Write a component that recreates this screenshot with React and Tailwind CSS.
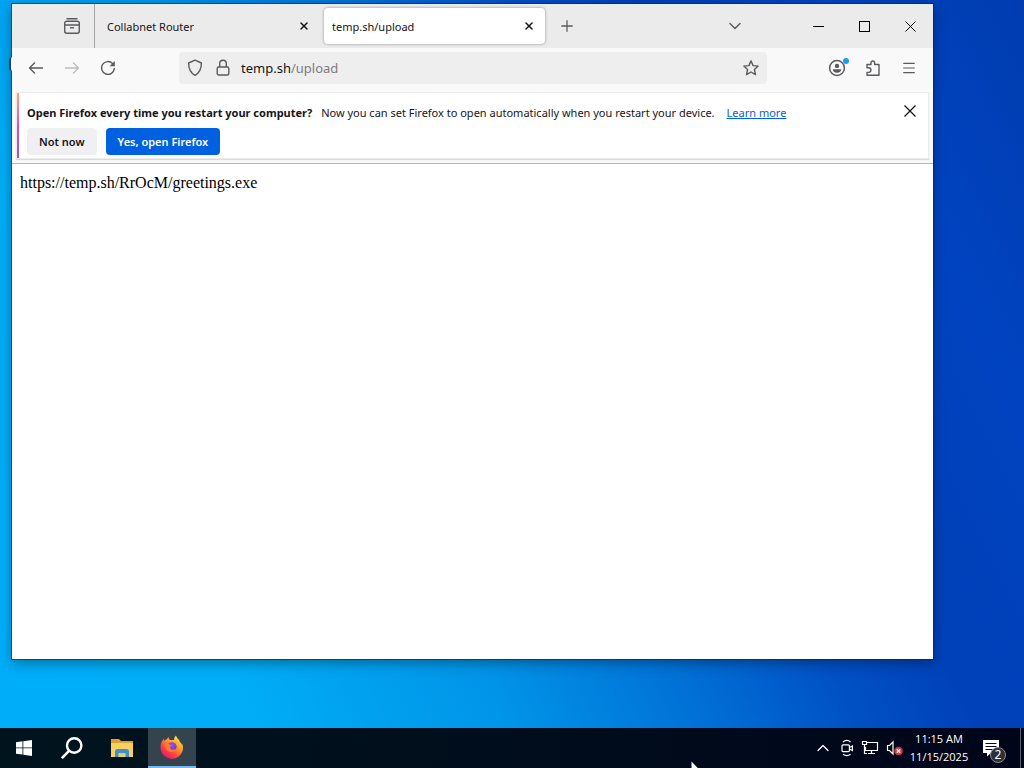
import React from 'react'
import { ChevronDown, ChevronUp, Menu, Plus, X } from 'lucide-react'

const iconButton = "flex h-8 w-8 items-center justify-center rounded text-[#5b5b5f] hover:bg-black/5"
const captionButton = "flex h-11 w-[46px] items-center justify-center text-black hover:bg-black/10"

function TabOverviewIcon() {
  return (
    <svg width="16" height="16" viewBox="0 0 16 16" fill="none" stroke="currentColor" strokeWidth="1.4">
      <path d="M3 .8h10" strokeLinecap="round" />
      <path d="M.7 7V5.2a2 2 0 0 1 2-2h10.600a2 2 0 0 1 2 2V7M.7 7v6.300a2 2 0 0 0 2 2h10.600a2 2 0 0 0 2-2V7z" />
      <path d="M6 9.800h4" />
    </svg>
  )
}

function BackIcon() {
  return (
    <svg width="16" height="16" viewBox="0 0 16 16" fill="none" stroke="currentColor" strokeWidth="1.4" strokeLinecap="round" strokeLinejoin="round">
      <path d="M14.5 8h-13M6.5 3l-5 5 5 5" />
    </svg>
  )
}

function ForwardIcon() {
  return (
    <svg width="16" height="16" viewBox="0 0 16 16" fill="none" stroke="currentColor" strokeWidth="1.4" strokeLinecap="round" strokeLinejoin="round">
      <path d="M1.5 8h13M9.5 3l5 5-5 5" />
    </svg>
  )
}

function ReloadIcon() {
  return (
    <svg width="16" height="16" viewBox="0 0 16 16" fill="none" stroke="currentColor" strokeWidth="1.4" strokeLinecap="round">
      <path d="M14.3 8.5A6.4 6.4 0 1 1 12.6 3.6" />
      <path d="M14.8 1v5.2H9.6z" fill="currentColor" stroke="none" />
    </svg>
  )
}

function ShieldIcon() {
  return (
    <svg width="16" height="18" viewBox="0 0 16 18" fill="none" stroke="currentColor" strokeWidth="1.4" strokeLinejoin="round">
      <path d="M8 1.2 14.4 4c0 6-2 10-6.4 12.3C3.6 14 1.6 10 1.6 4z" />
    </svg>
  )
}

function LockIcon() {
  return (
    <svg width="14" height="18" viewBox="0 0 14 18" fill="none" stroke="currentColor" strokeWidth="1.4">
      <rect x="1.2" y="8" width="11.6" height="8" rx="1.5" />
      <path d="M3.7 8V4.500a3.3 3.3 0 0 1 6.600 0V8" />
    </svg>
  )
}

function StarIcon() {
  return (
    <svg width="16" height="16" viewBox="0 0 16 16" fill="none" stroke="currentColor" strokeWidth="1.4" strokeLinejoin="round">
      <path d="M8 .9l2.1 4.700 5.100.5-3.800 3.400 1.100 5.100L8 12l-4.500 2.600 1.100-5.100L.8 6.100l5.100-.5z" />
    </svg>
  )
}

function AccountIcon() {
  return (
    <svg width="18" height="18" viewBox="0 0 18 18" fill="none">
      <circle cx="9" cy="9" r="7.4" stroke="currentColor" strokeWidth="1.5" />
      <circle cx="9" cy="6.9" r="2.2" fill="currentColor" />
      <path d="M4.800 10.200h8.400c0 2-1.600 3.500-4.200 3.500s-4.200-1.500-4.200-3.500z" fill="currentColor" />
    </svg>
  )
}

function ExtensionsIcon() {
  return (
    <svg width="16" height="16" viewBox="0 0 16 16" fill="none" stroke="currentColor" strokeWidth="1.4" strokeLinejoin="round">
      <path d="M2 7.800V4.500h4V2.800a1.800 1.800 0 0 1 3.600 0v1.700H14v10.800H2v-2.900h1.600a1.700 1.700 0 0 0 0-4.600z" />
    </svg>
  )
}

function FolderIcon() {
  return (
    <svg width="22" height="19" viewBox="0 0 22 19">
      <path d="M0 0h8l2 2h12v16H0z" fill="#e0a030" />
      <path d="M0 4h22v14H0z" fill="#f8d060" />
      <path d="M4 18v-5.500A2.500 2.500 0 0 1 6.500 10h9a2.500 2.500 0 0 1 2.500 2.500V18h-3.500v-3h-7v3z" fill="#3f8fd0" />
      <path d="M7.500 14h7v2h-7z" fill="#c4dc5a" />
    </svg>
  )
}

function FirefoxIcon() {
  return (
    <svg width="24" height="24" viewBox="0 0 24 24">
      <defs>
        <linearGradient id="fox" x1="0.85" y1="0.1" x2="0.2" y2="0.95">
          <stop offset="0" stopColor="#ffe54a" />
          <stop offset="0.35" stopColor="#ff9a26" />
          <stop offset="0.7" stopColor="#ff4048" />
          <stop offset="1" stopColor="#e5156f" />
        </linearGradient>
        <radialGradient id="globe" cx="0.5" cy="0.3" r="0.7">
          <stop offset="0" stopColor="#a247f0" />
          <stop offset="1" stopColor="#5a3fc8" />
        </radialGradient>
      </defs>
      <path d="M2.500 5.500c.4-.8.8-1.400 1.300-1.800 0 .9.2 1.500.6 2 .8-.8 1.500-1.200 2.400-1.400C7.200 3.400 7.800 2.500 8.800 2c-.3 1.300 0 2.500 1.400 3.100L14 5c.1-1.800.6-3.300 2-4.400.5 2 1.700 3 3.300 4.700l.4 1.700c1 .3 1.800 1.500 2.100 2.700l.5-.8c1.200 3 .9 7-1.300 10A11.300 11.300 0 0 1 1 15.500C0 12 .6 8.300 2.500 5.500z" fill="url(#fox)" />
      <circle cx="12" cy="11.800" r="4.600" fill="url(#globe)" />
      <path d="M4.500 8.500c2-.7 4.300 0 5.500 1.200l1.600.2c-.2 1.200-1 1.400-1.500 1.800-.4 1.500 1 3.500 3.600 2.800 1.500-.5 2.700-.3 3 .3-1 1.800-3 2.400-5.400 2.200C7 16.800 4.500 13 4.500 8.500z" fill="#ff7a2a" />
    </svg>
  )
}

function MeetNowIcon() {
  return (
    <svg width="14" height="18" viewBox="0 0 14 18" fill="none" stroke="currentColor" strokeWidth="1.2">
      <rect x="2" y="5.800" width="7.400" height="6.800" rx="1" />
      <path d="M9.400 8.500 12.400 7v4.500l-3-1.500M3 3c2.200-1.800 5.400-1.800 7.600 0M3 15.300c2.200 1.500 5.400 1.500 7.600 0" />
    </svg>
  )
}

function NetworkIcon() {
  return (
    <svg width="18" height="16" viewBox="0 0 18 16" fill="none" stroke="currentColor" strokeWidth="1.2">
      <path d="M6 2.500h10.500v8H4.500V7M10.500 10.500v3M7 13.500h7" />
      <path d="M1.500 1.500h4v3h-4zM3.500 4.500v9H6" />
    </svg>
  )
}

function VolumeIcon() {
  return (
    <svg width="18" height="16" viewBox="0 0 18 16" fill="none">
      <path d="M1.500 5.500h2L7 2v12l-3.500-3.500h-2z" stroke="currentColor" strokeWidth="1.2" />
      <circle cx="12.500" cy="11" r="4.300" fill="#d8303c" />
      <path d="M10.800 9.300l3.400 3.400M14.200 9.300l-3.400 3.400" stroke="#fff" strokeWidth="1.5" />
    </svg>
  )
}

function Tab({ title, active }) {
  return (
    <div
      className={
        active
          ? "flex h-9 w-[221px] items-center justify-between rounded bg-white pl-2 pr-1 shadow-[0_0_3px_rgba(0,0,0,0.4)]"
          : "flex h-9 w-[221px] items-center justify-between pl-3"
      }
    >
      <span className="truncate pt-0.5">{title}</span>
      <button type="button" aria-label={`Close ${title}`} className="flex h-6 w-6 items-center justify-center rounded hover:bg-black/10">
        <X size={12} strokeWidth={3} />
      </button>
    </div>
  )
}

function TabStrip() {
  return (
    <div className="flex h-11 items-center bg-[#ebebeb] text-[11px] text-[#15141a]">
      <div className="flex h-11 w-[83px] items-center justify-end border-r border-[#a5a5a8] pr-3.5">
        <button type="button" aria-label="View recent browsing" className="text-[#5b5b5f]">
          <TabOverviewIcon />
        </button>
      </div>
      <div className="flex items-center gap-2">
        <Tab title="Collabnet Router" />
        <Tab title="temp.sh/upload" active />
      </div>
      <button type="button" aria-label="New tab" className="ml-1.5 flex h-8 w-8 items-center justify-center text-[#5b5b5f]">
        <Plus size={18} strokeWidth={1.7} />
      </button>
      <button type="button" aria-label="List all tabs" className="ml-auto mr-11 flex h-8 w-8 items-center justify-center text-[#5b5b5f]">
        <ChevronDown size={20} strokeWidth={1.7} />
      </button>
      <div className="flex">
        <button type="button" aria-label="Minimize" className={captionButton}>
          <svg width="11" height="11" viewBox="0 0 11 11"><path d="M0 5.500h11" stroke="currentColor" /></svg>
        </button>
        <button type="button" aria-label="Maximize" className={captionButton}>
          <svg width="11" height="11" viewBox="0 0 11 11"><rect x="0.5" y="0.5" width="10" height="10" fill="none" stroke="currentColor" /></svg>
        </button>
        <button type="button" aria-label="Close window" className={captionButton}>
          <svg width="11" height="11" viewBox="0 0 11 11"><path d="M0.5 0.5l10 10M10.5 0.5l-10 10" stroke="currentColor" /></svg>
        </button>
      </div>
    </div>
  )
}

function NavBar() {
  return (
    <div className="flex h-11 items-center bg-[#f9f9f9] px-2 pb-1">
      <div className="flex gap-1">
        <button type="button" aria-label="Back" className={iconButton}><BackIcon /></button>
        <button type="button" aria-label="Forward" disabled className="flex h-8 w-8 items-center justify-center text-[#bcbcbe]"><ForwardIcon /></button>
        <button type="button" aria-label="Reload" className={iconButton}><ReloadIcon /></button>
      </div>
      <div className="ml-[55px] mr-[54px] flex h-8 flex-1 items-center rounded bg-[#eeeeee] text-[#5b5b5f]">
        <button type="button" aria-label="Tracking protection" className="ml-2"><ShieldIcon /></button>
        <button type="button" aria-label="Site security" className="ml-[13px]"><LockIcon /></button>
        <label className="relative ml-[11px] flex-1 pt-px text-[13px]">
          <input
            type="text"
            aria-label="Address"
            defaultValue="temp.sh/upload"
            className="w-full bg-transparent text-transparent caret-black outline-none"
          />
          <span aria-hidden="true" className="pointer-events-none absolute inset-0 flex items-center pt-0.5 text-[#7c7c80]">
            <span className="text-[#15141a]">temp.sh</span>/upload
          </span>
        </label>
        <button type="button" aria-label="Bookmark this page" className="mr-2"><StarIcon /></button>
      </div>
      <div className="flex gap-1">
        <button type="button" aria-label="Account" className="relative flex h-8 w-8 items-center justify-center text-[#5b5b5f]">
          <AccountIcon />
          <span className="absolute right-1 top-1.5 h-1.5 w-1.5 rounded-full bg-[#1f9cf0]"></span>
        </button>
        <button type="button" aria-label="Extensions" className={iconButton}><ExtensionsIcon /></button>
        <button type="button" aria-label="Open application menu" className={iconButton}><Menu size={16} strokeWidth={1.7} /></button>
      </div>
    </div>
  )
}

function Notification() {
  return (
    <div className="border-b border-[#b5b5b8] bg-[#f9f9f9] px-1 pb-1">
      <div className="flex items-start border border-[#ececec] bg-white shadow-[0_1px_1px_rgba(0,0,0,0.12)]">
        <div className="w-0.5 self-stretch bg-gradient-to-b from-[#ffa05c] via-[#d44fc0] to-[#8a55e8]"></div>
        <div className="flex-1 pb-[3px] pl-2 pt-[11px]">
          <p className="text-[11px] leading-[18px] text-[#15141a]">
            <strong className="mr-1.5 font-bold">Open Firefox every time you restart your computer?</strong>{' '}
            Now you can set Firefox to open automatically when you restart your device.
            <a href="#learn" className="ml-3 text-[#0060df] underline">Learn more</a>
          </p>
          <div className="mt-1.5 flex gap-[9px] text-[11px] font-semibold">
            <button type="button" className="h-[27px] rounded bg-[#f0f0f2] px-3 pt-px text-[#15141a]">Not now</button>
            <button type="button" className="h-[27px] rounded bg-[#0061e0] px-3 pt-px text-white">Yes, open Firefox</button>
          </div>
        </div>
        <button type="button" aria-label="Dismiss" className="mr-1.5 mt-1.5 flex h-6 w-6 items-center justify-center text-[#15141a]">
          <svg width="12" height="12" viewBox="0 0 12 12"><path d="M0.5 0.5l11 11M11.5 0.5l-11 11" stroke="currentColor" strokeWidth="1.3" /></svg>
        </button>
      </div>
    </div>
  )
}

function Taskbar() {
  return (
    <footer className="flex h-10 items-center bg-gradient-to-r from-[#00141e] to-[#00061a] text-white">
      <button type="button" aria-label="Start" className="flex h-10 w-12 items-center justify-center">
        <svg width="16" height="16" viewBox="0 0 16 16" fill="currentColor">
          <path d="M0 2.200 6.500 1.300v6.200H0zM7.300 1.200 16 0v7.500H7.300zM0 8.300h6.500v6.300L0 13.700zM7.300 8.300H16V16l-8.700-1.200z" />
        </svg>
      </button>
      <button type="button" aria-label="Search" className="flex h-10 w-12 items-center justify-center">
        <svg width="22" height="22" viewBox="0 0 22 22" fill="none" stroke="currentColor" strokeWidth="2.4">
          <circle cx="13.2" cy="8.500" r="7.200" />
          <path d="M8 13.800.8 21.200" strokeWidth="2.6" />
        </svg>
      </button>
      <button type="button" aria-label="File Explorer" className="flex h-10 w-[52px] items-center justify-center"><FolderIcon /></button>
      <button type="button" aria-label="Firefox" className="flex h-10 w-12 items-center justify-center border-b-2 border-[#76b9ed] bg-[#34434d]"><FirefoxIcon /></button>
      <div className="ml-auto flex h-10 items-center">
        <div className="flex items-center gap-[7px]">
          <button type="button" aria-label="Show hidden icons"><ChevronUp size={20} strokeWidth={1.5} /></button>
          <button type="button" aria-label="Meet Now"><MeetNowIcon /></button>
          <button type="button" aria-label="Network"><NetworkIcon /></button>
          <button type="button" aria-label="Volume"><VolumeIcon /></button>
        </div>
        <button type="button" className="ml-1 w-[62px] whitespace-nowrap text-center font-['Open_Sans',sans-serif] text-[11px] leading-[18px]">
          <span className="block">11:15 AM</span>
          <span className="block">11/15/2025</span>
        </button>
        <button type="button" aria-label="Notifications" className="relative ml-3 mr-5">
          <svg width="18" height="18" viewBox="0 0 18 18">
            <path d="M1 1h16v13H9l-4 3.500V14H1z" fill="#fff" />
            <path d="M3.500 4.500h11M3.500 7.500h11M3.500 10.500h7" stroke="#00081a" strokeWidth="1.2" />
          </svg>
          <span className="absolute left-2 top-2 flex h-4 w-4 items-center justify-center rounded-full border border-[#8a8a8a] bg-[#2c3038] text-xs">2</span>
        </button>
        <div className="h-10 w-1 border-l border-[#5a6270]"></div>
      </div>
    </footer>
  )
}

function App() {
  return (
    <div className="relative flex min-h-screen flex-col overflow-hidden bg-[linear-gradient(64deg,#00adfa_0%,#00adf6_20%,#0094e8_38%,#0070d6_52%,#0050c4_63%,#0040b8_72%,#0043c0_86%,#003cb0_100%)] font-['Noto_Sans',sans-serif]">
      <div className="flex flex-1 flex-col pb-[69px] pl-3 pr-[91px] pt-1">
        <main className="flex flex-1 flex-col bg-white shadow-[0_0_0_1px_rgba(0,40,80,0.6),0_4px_12px_rgba(0,0,0,0.35)]">
          <TabStrip />
          <NavBar />
          <Notification />
          <pre className="p-[7px] pl-2 font-['Liberation_Serif',serif] text-base">https://temp.sh/RrOcM/greetings.exe</pre>
        </main>
      </div>
      <Taskbar />
      {/* edge of a desktop shortcut peeking out behind the window */}
      <span className="absolute left-[9px] top-[57px] h-3.5 w-[3px] rounded-l-full border-l-2 border-[#0b3f8a] bg-white"></span>
      {/* mouse pointer */}
      <svg className="pointer-events-none absolute -bottom-3 left-[691px]" width="12" height="19" viewBox="0 0 12 19">
        <path d="M.5.500v16l3.800-3.700 2.500 5.700 2.200-1-2.400-5.500h5z" fill="#fff" />
      </svg>
    </div>
  )
}

export default App
